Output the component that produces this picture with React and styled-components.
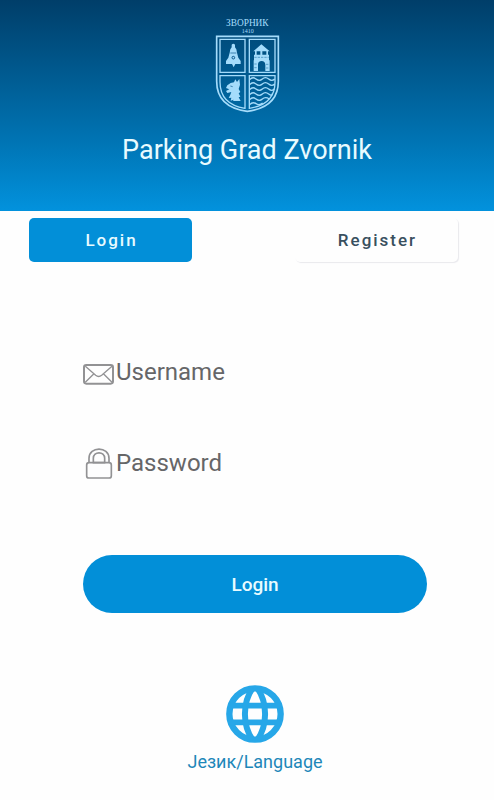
import React, { useState } from "react";
import styled, { createGlobalStyle } from "styled-components";

const colors = {
  primary: "#028fd8",
  dark: "#003e69",
  text: "#666668",
  tab: "#39505f",
  link: "#1d87b9",
  globe: "#27a7e8",
  crest: "#a5dcfb",
};

const GlobalStyle = createGlobalStyle`
  * {
    box-sizing: border-box;
  }
  body {
    margin: 0;
    background-color: #fefefe;
    font-family: Roboto, "Noto Sans", sans-serif;
  }
`;

const Page = styled.div`
  display: flex;
  flex-direction: column;
  min-height: 100vh;
`;

const Header = styled.header`
  display: flex;
  flex-direction: column;
  align-items: center;
  gap: 21px;
  padding: 18px 20px 45px;
  background: linear-gradient(${colors.dark}, #0075b5 68%, #0292dd);
`;

const Crest = styled.svg`
  width: 65px;
  height: 95px;
  fill: none;
  stroke: ${colors.crest};
`;

const Title = styled.h1`
  margin: 0;
  color: #e8fbff;
  font-size: 27px;
  font-weight: 400;
  line-height: 32px;
`;

const Tabs = styled.nav`
  display: flex;
  justify-content: space-between;
  padding: 7px 36px 0 29px;
`;

const Tab = styled.button`
  width: 38%;
  height: 44px;
  padding: 0 0 0 2px;
  border: none;
  border-radius: 5px;
  background-color: ${(props) => (props.$active ? colors.primary : "#fefefe")};
  box-shadow: ${(props) => (props.$active ? "none" : "1px 1px 1px #e9e9ed")};
  color: ${(props) => (props.$active ? "#e8fbff" : colors.tab)};
  font-family: inherit;
  font-size: 17px;
  font-weight: 500;
  letter-spacing: 2px;
`;

const Form = styled.form`
  display: flex;
  flex-direction: column;
  gap: 43px;
  padding: 86px 67px 0 83px;
`;

const Field = styled.label`
  display: flex;
  align-items: center;
  gap: 2px;
  height: 48px;
`;

const FieldIcon = styled.svg`
  flex: none;
  width: 31px;
  height: 31px;
  fill: none;
  stroke: #929294;
  stroke-width: 6;
  stroke-linejoin: round;
`;

const Input = styled.input`
  flex: 1;
  min-width: 0;
  height: 100%;
  padding: 0;
  border: none;
  outline: none;
  background: transparent;
  color: ${colors.text};
  font-family: inherit;
  font-size: 24px;

  &::placeholder {
    color: ${colors.text};
    opacity: 1;
  }
`;

const Submit = styled.button`
  height: 58px;
  margin-top: 25px;
  border: none;
  border-radius: 29px;
  background-color: ${colors.primary};
  color: #e8fbff;
  font-family: inherit;
  font-size: 19px;
  font-weight: 500;
`;

const Footer = styled.footer`
  display: flex;
  justify-content: center;
  padding: 72px 67px 24px 83px;
`;

const Language = styled.a`
  display: flex;
  flex-direction: column;
  align-items: center;
  gap: 7px;
  color: ${colors.link};
  font-size: 18px;
  line-height: 24px;
  text-decoration: none;
`;

const Globe = styled.svg`
  width: 58px;
  height: 58px;
  fill: none;
  stroke: ${colors.globe};
`;

const CrestText = styled.text`
  fill: ${colors.crest};
  stroke: none;
  font-family: "Liberation Serif", serif;
  font-size: ${(props) => props.$size}px;
  text-anchor: middle;
`;

function CityCrest() {
  return (
    <Crest viewBox="42 24 195 285" role="img" aria-label="Зворник 1410">
      <CrestText x="139" y="49" $size={28}>ЗВОРНИК</CrestText>
      <CrestText x="140" y="69" $size={18}>1410</CrestText>
      {/* shield */}
      <path strokeWidth="5" d="M47 79H232V214C232 266 202 296 139 304C76 296 47 266 47 214Z" />
      <path strokeWidth="4" d="M57 88H132V187H57ZM145 88H222V187H145ZM57 197H132V295C82 287 57 262 57 216Z" />
      <path strokeWidth="4" d="M145 197H222V216C222 262 198 287 145 295Z" />
      {/* bell */}
      <path
        fill={colors.crest}
        stroke="none"
        d="M92 104Q97 98 102 104V112Q107 116 108 128L112 143L119 153V162H103L98 172L93 162H75V153L82 143L86 128Q87 116 92 112Z"
      />
      <circle cx="97" cy="143" r="4" stroke="#07568b" strokeWidth="3" />
      <path d="M88 129H106" stroke="#07568b" strokeWidth="2" />
      {/* tower */}
      <g fill={colors.crest} stroke="none">
        <path d="M181 103L206 124H157ZM162 124H167V136H162ZM178 124H184V136H178ZM196 124H201V136H196Z" />
        <path d="M159 134H204V151H206V183H193V164Q192 153 182 153Q171 153 171 164V183H158V151H159Z" />
      </g>
      <path d="M160 142H203M160 162H169M195 163H204M160 173H169M195 174H204" stroke="#2f7fb0" strokeWidth="2" strokeDasharray="7 3" />
      {/* wolf head */}
      <path
        fill={colors.crest}
        stroke="none"
        d="M99 217L103 208L108 216L115 207L117 224L113 237L118 246L113 250L118 260L113 262L119 273H96L98 269L89 272L91 263L83 264L88 254L91 246L79 249L75 243L85 238L75 234L79 226L89 219Z"
      />
      <path d="M88 228L95 230" stroke="#07568b" strokeWidth="2" />
      {/* river */}
      <path
        strokeWidth="4"
        d="M146 209Q155 199 165 207T184 207T203 207T221 207M146 224Q155 214 165 222T184 222T203 222T221 222M146 239Q155 229 165 237T184 237T203 237T220 237M146 254Q155 244 165 252T184 252T203 252T214 251M146 269Q155 259 165 267T184 267T205 267M146 284Q155 274 165 281T185 279"
      />
    </Crest>
  );
}

function App() {
  const [tab, setTab] = useState("Login");

  return (
    <Page>
      <GlobalStyle />
      <Header>
        <CityCrest />
        <Title>Parking Grad Zvornik</Title>
      </Header>
      <Tabs>
        {["Login", "Register"].map((name) => (
          <Tab key={name} type="button" $active={tab === name} onClick={() => setTab(name)}>
            {name}
          </Tab>
        ))}
      </Tabs>
      <Form onSubmit={(e) => e.preventDefault()}>
        <Field htmlFor="username">
          <FieldIcon viewBox="24 20 93 93" aria-hidden="true">
            <rect x="27" y="44" width="87" height="56" rx="7" />
            <path strokeWidth="4" d="M31 48L62 75Q71 82 80 75L111 48M31 96L56 71M111 96L86 71" />
          </FieldIcon>
          <Input id="username" type="text" placeholder="Username" aria-label="Username" />
        </Field>
        <Field htmlFor="password">
          <FieldIcon viewBox="24 292 93 93" aria-hidden="true">
            <rect x="35" y="336" width="74" height="46" rx="7" strokeWidth="5" />
            <path strokeWidth="5" d="M42 336V323C42 286 102 286 102 323V336M55 336V323C55 301 89 301 89 323V336Z" />
          </FieldIcon>
          <Input id="password" type="password" placeholder="Password" aria-label="Password" />
        </Field>
        <Submit type="submit">Login</Submit>
      </Form>
      <Footer>
        <Language href="#language">
          <Globe viewBox="160 29 174 174" aria-hidden="true">
            <circle cx="247" cy="116" r="77" strokeWidth="19" />
            <path strokeWidth="17" d="M172 91H322M172 141H322" />
            <path strokeWidth="18" d="M240 38C209 82 209 150 240 194M254 38C285 82 285 150 254 194" />
          </Globe>
          Језик/Language
        </Language>
      </Footer>
    </Page>
  );
}

export default App;
